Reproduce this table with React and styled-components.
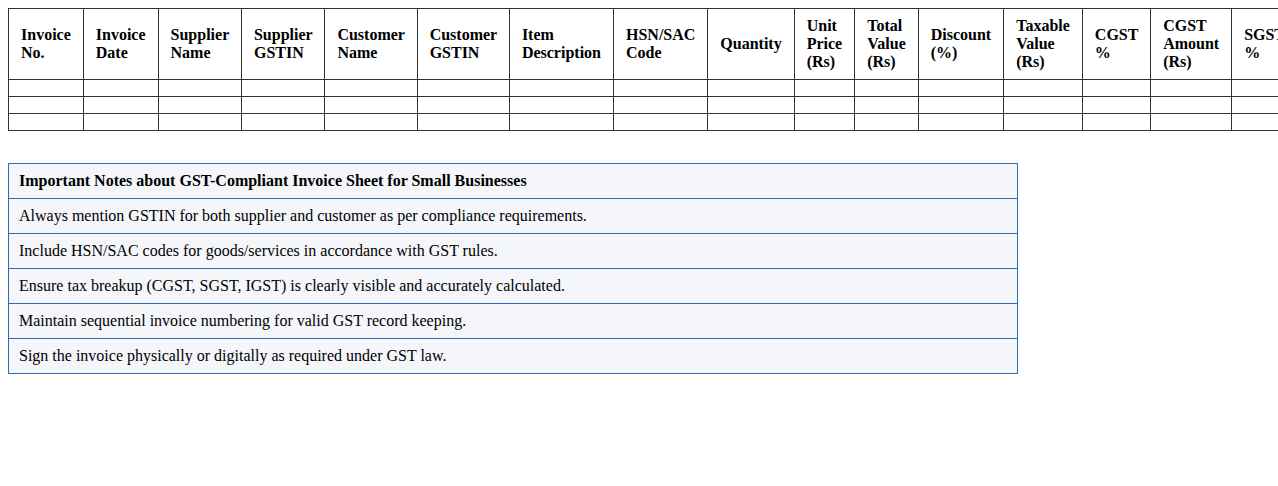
import React from "react";
import styled, { createGlobalStyle } from "styled-components";

const Global = createGlobalStyle`
  html {
    overflow: hidden;
  }
  body {
    margin: 0;
    padding: 8px;
    font-family: "Liberation Serif", "Times New Roman", serif;
    color: #000;
    background: #fff;
  }
`;

const InvoiceTable = styled.table`
  width: 100%;
  border-collapse: collapse;
  font-size: 16px;
`;

const HeadCell = styled.th`
  border: 1px solid #333;
  padding: 8px 12px;
  text-align: left;
  font-weight: bold;
`;

const Cell = styled.td`
  border: 1px solid #333;
  padding: 8px 12px;
`;

const NotesTable = styled.table`
  width: 80%;
  margin-top: 32px;
  border-collapse: collapse;
  background: #f4f6fa;
  font-size: 16px;
`;

const NoteCell = styled.td`
  border: 1px solid #2b6cb8;
  padding: 8px 10px;
  font-weight: ${(p) => (p.$head ? "bold" : "normal")};
`;

const headers = [
  "Invoice No.",
  "Invoice Date",
  "Supplier Name",
  "Supplier GSTIN",
  "Customer Name",
  "Customer GSTIN",
  "Item Description",
  "HSN/SAC Code",
  "Quantity",
  "Unit Price (Rs)",
  "Total Value (Rs)",
  "Discount (%)",
  "Taxable Value (Rs)",
  "CGST %",
  "CGST Amount (Rs)",
  "SGST %",
  "SGST Amount (Rs)",
  "IGST %",
  "IGST Amount (Rs)",
  "Total Amount (Rs)",
];

const notes = [
  "Always mention GSTIN for both supplier and customer as per compliance requirements.",
  "Include HSN/SAC codes for goods/services in accordance with GST rules.",
  "Ensure tax breakup (CGST, SGST, IGST) is clearly visible and accurately calculated.",
  "Maintain sequential invoice numbering for valid GST record keeping.",
  "Sign the invoice physically or digitally as required under GST law.",
];

export default function App() {
  return (
    <>
      <Global />
      <InvoiceTable>
        <thead>
          <tr>
            {headers.map((h) => (
              <HeadCell key={h}>{h}</HeadCell>
            ))}
          </tr>
        </thead>
        <tbody>
          {[0, 1, 2].map((r) => (
            <tr key={r}>
              {headers.map((h) => (
                <Cell key={h}></Cell>
              ))}
            </tr>
          ))}
        </tbody>
      </InvoiceTable>
      <NotesTable>
        <tbody>
          <tr>
            <NoteCell $head>Important Notes about GST-Compliant Invoice Sheet for Small Businesses</NoteCell>
          </tr>
          {notes.map((n) => (
            <tr key={n}>
              <NoteCell>{n}</NoteCell>
            </tr>
          ))}
        </tbody>
      </NotesTable>
    </>
  );
}
